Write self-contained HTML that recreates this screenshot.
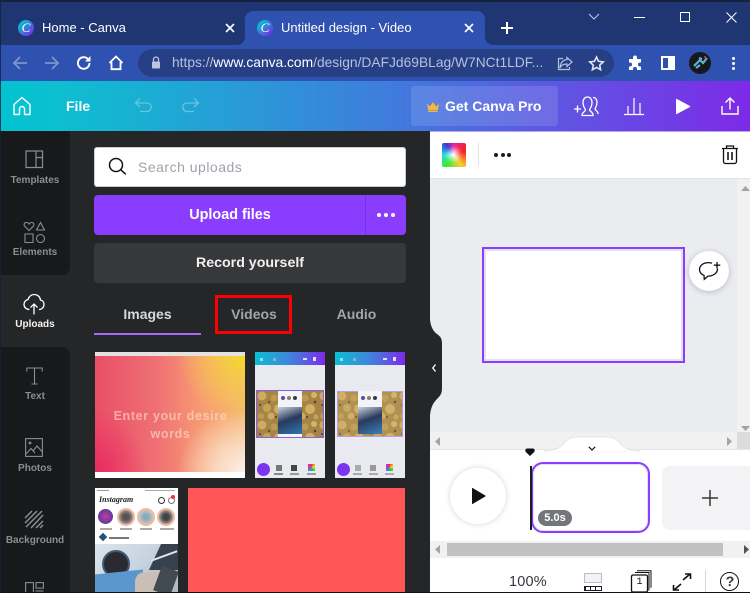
<!DOCTYPE html>
<html><head><meta charset="utf-8">
<style>
html,body{margin:0;padding:0;background:#fff}
#p{position:relative;width:750px;height:593px;overflow:hidden;font-family:"Liberation Sans",sans-serif;background:#fff}
#p div,#p span,#p svg{position:absolute}
.t{white-space:nowrap;line-height:1}
.side{left:0;width:70px;text-align:center;font-size:10px;font-weight:bold;color:#8b8d90;letter-spacing:0}
svg.abs{overflow:visible}
</style></head><body>
<div id="p">
<!-- chrome -->
<div style="left:0;top:0;width:750px;height:45px;background:#1f3672"></div>
<div style="left:0;top:0;width:750px;height:2px;background:#14213f"></div>
<div style="left:245px;top:11px;width:240px;height:34px;background:#2f52b0;border-radius:8px 8px 0 0"></div>
<div style="left:0;top:45px;width:750px;height:37px;background:#2f52b0"></div>
<div style="left:237px;top:37px;width:8px;height:8px;background:#2f52b0"></div>
<div style="left:229px;top:37px;width:16px;height:8px;background:#1f3672;border-radius:0 0 8px 0"></div>
<div style="left:485px;top:37px;width:8px;height:8px;background:#2f52b0"></div>
<div style="left:485px;top:37px;width:16px;height:8px;background:#1f3672;border-radius:0 0 0 8px"></div>
<div style="left:18px;top:20px;width:16px;height:16px;border-radius:50%;background:linear-gradient(135deg,#00c4cc 15%,#7d2ae8 90%)"></div>
<div class="t" style="left:18px;top:20px;width:16px;text-align:center;font:italic 13px/16px 'Liberation Serif',serif;color:#fff">C</div>
<div class="t" style="left:42px;top:21px;font-size:13px;color:#fff">Home - Canva</div>
<svg class="abs" style="left:225px;top:23px" width="10" height="10"><path d="M1 1l8 8M9 1l-8 8" stroke="#fff" stroke-width="1.600"/></svg>
<div style="left:257px;top:20px;width:16px;height:16px;border-radius:50%;background:linear-gradient(135deg,#00c4cc 15%,#7d2ae8 90%)"></div>
<div class="t" style="left:257px;top:20px;width:16px;text-align:center;font:italic 13px/16px 'Liberation Serif',serif;color:#fff">C</div>
<div class="t" style="left:281px;top:21px;font-size:13px;color:#fff">Untitled design - Video</div>
<svg class="abs" style="left:464px;top:23px" width="10" height="10"><path d="M1 1l8 8M9 1l-8 8" stroke="#fff" stroke-width="1.600"/></svg>
<svg class="abs" style="left:501px;top:22px" width="12" height="12"><path d="M6 0v12M0 6h12" stroke="#fff" stroke-width="2"/></svg>
<svg class="abs" style="left:588px;top:13px" width="12" height="8"><path d="M1 1l5 5 5-5" stroke="#c5cde3" stroke-width="1" fill="none"/></svg>
<div style="left:634px;top:17px;width:11px;height:1px;background:#fff"></div>
<div style="left:680px;top:12px;width:8px;height:8px;border:1px solid #fff"></div>
<svg class="abs" style="left:726px;top:12px" width="11" height="11"><path d="M.5.500l10 10M10.500.500l-10 10" stroke="#fff" stroke-width="1"/></svg>
<!-- nav -->
<svg class="abs" style="left:12px;top:55px" width="16" height="16"><path d="M15 8H2M8 2L2 8l6 6" stroke="#7f95cf" stroke-width="1.800" fill="none"/></svg>
<svg class="abs" style="left:44px;top:55px" width="16" height="16"><path d="M1 8h13M8 2l6 6-6 6" stroke="#7f95cf" stroke-width="1.800" fill="none"/></svg>
<svg class="abs" style="left:76px;top:55px" width="16" height="16"><path d="M13.500 8a5.800 5.800 0 1 1-1.700-4.100" stroke="#fff" stroke-width="1.900" fill="none"/><path d="M14.500 1v5.500H9z" fill="#fff"/></svg>
<svg class="abs" style="left:108px;top:55px" width="16" height="16"><path d="M1.500 8L8 1.500 14.500 8M3.500 7v7.200h9V7" stroke="#fff" stroke-width="1.800" fill="none"/></svg>
<div style="left:138px;top:49px;width:476px;height:28px;border-radius:14px;background:#263f85"></div>
<svg class="abs" style="left:150px;top:56px" width="12" height="13"><rect x="2" y="5.500" width="8" height="7" rx="1" fill="#bcc5dd"/><path d="M3.500 6V3.500a2.500 2.500 0 0 1 5 0V6" stroke="#bcc5dd" stroke-width="1.300" fill="none"/></svg>
<div class="t" style="left:172px;top:56px;font-size:13.800px;color:#b5c0dc">https://<span style="position:static;color:#fff">www.canva.com</span>/design/DAFJd69BLag/W7NCt1LDF...</div>
<svg class="abs" style="left:557px;top:56px" width="16" height="15"><path d="M10 1.500l5 4.500-5 4.500V8C6 8 4 9.500 3 12c0-5 3-8 7-8.500zM6 2.500H1.500v11h11V11" stroke="#b5c0dc" stroke-width="1.200" fill="none"/></svg>
<svg class="abs" style="left:589px;top:56px" width="15" height="14"><path d="M7.500 1l2 4.300 4.700.6-3.500 3.200.9 4.600-4.100-2.300-4.100 2.300.9-4.600L.8 5.900l4.700-.6z" stroke="#dfe4f2" stroke-width="1.600" fill="none"/></svg>
<svg class="abs" style="left:628px;top:55px" width="15" height="15"><path d="M5 2.500a2 2 0 0 1 4 0V4h4v3.500h-1a2 2 0 0 0 0 4h1V15H9v-1a2 2 0 0 0-4 0v1H1v-3.500h1a2 2 0 0 0 0-4H1V4h4z" fill="#fff"/></svg>
<div style="left:661px;top:56px;height:10px;border:2px solid #fff;border-right:7px solid #fff;width:5px"></div>
<div style="left:689px;top:52px;width:22px;height:22px;border-radius:50%;background:#16181d"></div>
<svg class="abs" style="left:691px;top:55px" width="18" height="16"><path d="M3 11L9 5l3 3 4-5M5 13l4-3M8 3l3 1" stroke="#5fb5cf" stroke-width="2.200" fill="none"/><circle cx="14" cy="2" r="1" fill="#d44"/></svg>
<div style="left:732px;top:57px;width:3px;height:3px;border-radius:50%;background:#fff"></div>
<div style="left:732px;top:62px;width:3px;height:3px;border-radius:50%;background:#fff"></div>
<div style="left:732px;top:67px;width:3px;height:3px;border-radius:50%;background:#fff"></div>
<!-- canva header -->
<div style="left:0;top:81px;width:750px;height:50px;background:linear-gradient(90deg,#02c3cf 0%,#0dbfd0 8%,#3d7fdc 50%,#5f55e2 75%,#7d2ae8 100%)"></div>
<svg class="abs" style="left:12px;top:96px" width="20" height="20"><path d="M2 18.500h5.500V13a2.500 2.500 0 0 1 5 0v5.500H18V8.500L10 1.500 2 8.500z" stroke="#fff" stroke-width="1.400" fill="none" stroke-linejoin="round"/></svg>
<div class="t" style="left:66px;top:99px;font-size:14px;font-weight:bold;color:#fff">File</div>
<svg class="abs" style="left:134px;top:97px" width="20" height="16"><path d="M6 1.500L1.500 6 6 10M2 6h11a4 4 0 0 1 0 8.500H6" stroke="#6bc3dc" stroke-width="1.300" fill="none"/></svg>
<svg class="abs" style="left:180px;top:97px" width="20" height="16"><path d="M14 1.500L18.500 6 14 10M18 6H7a4 4 0 0 0 0 8.500h7" stroke="#6bc3dc" stroke-width="1.300" fill="none"/></svg>
<div style="left:411px;top:86px;width:147px;height:40px;border-radius:3px;background:rgba(255,255,255,.12)"></div>
<svg class="abs" style="left:427px;top:102px" width="12" height="10"><path d="M0 1.500l3 3L6 0l3 4.500 3-3L10.800 8H1.200z" fill="#f5b83d"/><rect x="1.200" y="8.500" width="9.600" height="1.500" fill="#f5b83d"/></svg>
<div class="t" style="left:445px;top:99px;font-size:14px;font-weight:bold;color:#fff">Get Canva Pro</div>
<svg class="abs" style="left:574px;top:95px" width="25" height="22"><path d="M0 14h7M3.500 10.500v7" stroke="#fff" stroke-width="1.300"/><path d="M8 20.500h11c.5-3-3-4-3.500-5.500.5-1.500 2.500-3.500 2.500-7.500C18 4 16 2 13.500 2S9 4 9 7.500c0 4 2 6 2.500 7.500C11 17 7.500 17.500 8 20.500zM19 2.500c2.500 0 4 2 4 5 0 3.500-1.500 5-2 6.500.5 1.500 3.500 2.500 3 5" stroke="#fff" stroke-width="1.300" fill="none"/></svg>
<svg class="abs" style="left:624px;top:96px" width="20" height="20"><path d="M0 18.500h20M4 18V10M10 18V2M16 18V7" stroke="#fff" stroke-width="1.200"/></svg>
<svg class="abs" style="left:675px;top:98px" width="16" height="17"><path d="M1 1.500v14a.6.600 0 0 0 .9.500L15 9a.6.600 0 0 0 0-1L1.900 1a.6.600 0 0 0-.9.500z" fill="#fff"/></svg>
<svg class="abs" style="left:721px;top:97px" width="18" height="18"><path d="M9 12.500V1.500M4.500 5.500L9 1l4.500 4.500M1 9v8h16V9" stroke="#fff" stroke-width="1.400" fill="none"/></svg>
<!-- sidebar -->
<div style="left:0;top:131px;width:430px;height:462px;background:#252627"></div>
<div style="left:0;top:131px;width:70px;height:144px;background:#18191b;border-radius:0 0 8px 0"></div>
<div style="left:0;top:347px;width:70px;height:246px;background:#18191b;border-radius:0 8px 0 0"></div>
<svg class="abs" style="left:25px;top:150px" width="19" height="19"><path d="M1 1h16.500v16.500H1zM11 1v16.500M11 7.500h6.500" stroke="#8b8d90" stroke-width="1.200" fill="none"/></svg>
<div class="t side" style="top:176px">Templates</div>
<svg class="abs" style="left:23px;top:221px" width="22" height="24"><path d="M6 9.500L1.500 5c-1-1.200-.3-3.500 1.700-3.500C4.500 1.500 5.500 2 6 3c.5-1 1.500-1.500 2.800-1.500 2 0 2.700 2.300 1.700 3.500zM17.500 1.500L21.500 9h-8zM2 13h8v8.500H2z" stroke="#8b8d90" stroke-width="1.100" fill="none"/><circle cx="17.500" cy="17.500" r="4" stroke="#8b8d90" stroke-width="1.100" fill="none"/></svg>
<div class="t side" style="top:248px">Elements</div>
<svg class="abs" style="left:23px;top:293px" width="22" height="22"><path d="M6.500 16.500C3.500 16.500 1 14.500 1 11.500c0-2.700 2-4.700 4-5C6 3.500 8.300 1.500 11.200 1.500c3.500 0 6 2.500 6.300 5.500 2.200.5 3.500 2.400 3.500 4.500 0 2.800-2.300 5-5 5" stroke="#fff" stroke-width="1.300" fill="none"/><path d="M11 21.500v-10M7.500 14.500l3.500-3.500 3.500 3.500" stroke="#fff" stroke-width="1.300" fill="none"/></svg>
<div class="t side" style="top:320px;color:#f3f3f3">Uploads</div>
<svg class="abs" style="left:26px;top:367px" width="17" height="18"><path d="M.8 4.500V1h15.400v3.500M8.500 1v16M5.500 17h6" stroke="#8b8d90" stroke-width="1.100" fill="none"/></svg>
<div class="t side" style="top:392px">Text</div>
<svg class="abs" style="left:25px;top:438px" width="18" height="19"><rect x=".6" y=".6" width="16.800" height="17.800" stroke="#8b8d90" stroke-width="1.100" fill="none"/><path d="M1 16l5-5.500 4 4.500M8 13l4-5 5.500 6" stroke="#8b8d90" stroke-width="1.100" fill="none"/><circle cx="5" cy="5" r="1.400" fill="#8b8d90"/></svg>
<div class="t side" style="top:464px">Photos</div>
<svg class="abs" style="left:24px;top:510px" width="20" height="19"><path d="M1 8l7-7M1 13L13 1M2 17L18 1M7 18L19 5M12 18l7-7M16 18l3-3" stroke="#8b8d90" stroke-width="1.500"/></svg>
<div class="t side" style="top:536px">Background</div>
<svg class="abs" style="left:25px;top:582px" width="19" height="11"><rect x=".6" y=".6" width="7.800" height="10" stroke="#8b8d90" stroke-width="1.100" fill="none"/><rect x="11" y=".6" width="7.400" height="5.500" stroke="#8b8d90" stroke-width="1.100" fill="none"/><path d="M10.500 9h8" stroke="#8b8d90" stroke-width="1.100"/></svg>
<!-- panel -->
<div style="left:94px;top:147px;width:310px;height:38px;background:#fff;border:1px solid #c9ccd6;border-radius:3px"></div>
<svg class="abs" style="left:108px;top:157px" width="20" height="20"><circle cx="8" cy="8" r="6.500" stroke="#0e1318" stroke-width="1.500" fill="none"/><path d="M12.800 12.800l5 4.500" stroke="#0e1318" stroke-width="1.500"/></svg>
<div class="t" style="left:138px;top:160px;font-size:14px;color:#9ea2aa;letter-spacing:.5px">Search uploads</div>
<div style="left:94px;top:195px;width:312px;height:40px;background:#8b3dff;border-radius:4px"></div>
<div style="left:365px;top:195px;width:1px;height:40px;background:#7a30e6"></div>
<div class="t" style="left:94px;top:208px;width:272px;text-align:center;font-size:14.400px;font-weight:bold;color:#fff">Upload files</div>
<div style="left:377px;top:213px;width:4px;height:4px;border-radius:50%;background:#fff"></div>
<div style="left:384px;top:213px;width:4px;height:4px;border-radius:50%;background:#fff"></div>
<div style="left:391px;top:213px;width:4px;height:4px;border-radius:50%;background:#fff"></div>
<div style="left:94px;top:243px;width:312px;height:40px;background:#37383a;border-radius:4px"></div>
<div class="t" style="left:94px;top:256px;width:312px;text-align:center;font-size:14.200px;font-weight:bold;color:#f1f1f1">Record yourself</div>
<div class="t" style="left:94px;top:307px;width:107px;text-align:center;font-size:14px;font-weight:bold;color:#d6d7d9">Images</div>
<div style="left:94px;top:333px;width:107px;height:2px;background:#a36cf0"></div>
<div class="t" style="left:215px;top:307px;width:78px;text-align:center;font-size:14px;font-weight:bold;color:#a3a5a9">Videos</div>
<div class="t" style="left:303px;top:307px;width:107px;text-align:center;font-size:14px;font-weight:bold;color:#a3a5a9">Audio</div>
<div style="left:215px;top:295px;width:71px;height:33px;border:3px solid #ff0000"></div>
<!-- thumb 1 -->
<div style="left:95px;top:352px;width:150px;height:126px;background:#fff;overflow:hidden">
 <div style="left:0;top:0;width:150px;height:4px;background:#e4e2e0"></div>
 <div style="left:0;top:4px;width:150px;height:116px;background:radial-gradient(ellipse 45% 55% at 100% 0,#f4d92a 0,rgba(245,205,70,.75) 40%,rgba(246,184,92,0) 100%),radial-gradient(ellipse 45% 55% at 100% 100%,#fbf0ea 0,rgba(250,222,200,.85) 45%,rgba(246,190,140,0) 100%),radial-gradient(ellipse 35% 55% at 0 100%,#e92c60 0,rgba(233,50,96,0) 100%),linear-gradient(90deg,#ea4f68 0%,#ef6f74 40%,#f79c74 72%,#f5b86c 100%)"></div>
</div>
<div class="t" style="left:88px;top:407px;width:165px;text-align:center;font-size:12.500px;font-weight:bold;color:rgba(255,222,205,.62);letter-spacing:.65px;line-height:18px;white-space:normal"><span style="position:static;display:block;white-space:nowrap">Enter your desire</span><span style="position:static;display:block">words</span></div>
<!-- thumb 2 -->
<div style="left:255px;top:352px;width:70px;height:126px;background:#e9eaef;overflow:hidden">
 <div style="left:0;top:0;width:70px;height:13px;background:linear-gradient(90deg,#0bbfd0,#3f84dc 50%,#7d2ae8)"></div>
 <div style="left:5px;top:6px;width:3px;height:3px;background:#9fd8e8"></div><div style="left:18px;top:6px;width:3px;height:3px;background:#7fb4e0"></div><div style="left:48px;top:6px;width:4px;height:2px;background:#dfe0f8"></div><div style="left:58px;top:5px;width:3px;height:4px;background:#e4dcf8"></div>
 <div style="left:2px;top:39px;width:66px;height:46px;background:#8b6f3a;outline:1px solid #8a5fe0"></div>
 <svg class="abs" style="left:2px;top:39px" width="66" height="46"><defs><pattern id="g" width="31" height="29" patternUnits="userSpaceOnUse"><rect width="31" height="29" fill="#a58545"/><circle cx="5" cy="5" r="4.500" fill="#d0aa62"/><circle cx="17" cy="7" r="3.500" fill="#bd9a50"/><circle cx="26" cy="4" r="3" fill="#d6b26c"/><circle cx="10" cy="17" r="4" fill="#c8a258"/><circle cx="22" cy="18" r="5" fill="#d4ae66"/><circle cx="4" cy="25" r="3" fill="#bd9a50"/><circle cx="14" cy="25" r="3.500" fill="#d0aa62"/><circle cx="28" cy="26" r="2.500" fill="#c8a258"/><circle cx="12" cy="11" r="1" fill="#4c3e2a"/><circle cx="27" cy="11" r="1.200" fill="#4c3e2a"/><circle cx="3" cy="14" r="1" fill="#54452e"/><circle cx="19" cy="26" r="1" fill="#4c3e2a"/></pattern></defs><rect width="66" height="46" fill="url(#g)"/></svg>
 <div style="left:23px;top:39px;width:24px;height:16px;background:#f3f4f7"></div>
 <div style="left:26px;top:44px;width:4px;height:4px;border-radius:50%;background:#5f4d8c"></div>
 <div style="left:32px;top:44px;width:4px;height:4px;border-radius:50%;background:#8c7b70"></div>
 <div style="left:38px;top:44px;width:4px;height:4px;border-radius:50%;background:#3a3a40"></div>
 <div style="left:23px;top:55px;width:24px;height:28px;background:linear-gradient(160deg,#c9d4de 0,#2a3a5c 45%,#2f78b8 100%)"></div>
 <div style="left:23px;top:82px;width:24px;height:3px;background:#f3f4f7"></div>
 <div style="left:2px;top:111px;width:13px;height:13px;border-radius:50%;background:#7a36ef"></div>
 <div style="left:21px;top:113px;width:6px;height:6px;background:#777"></div>
 <div style="left:36px;top:113px;width:6px;height:6px;background:#444"></div>
 <div style="left:53px;top:112px;width:7px;height:7px;background:conic-gradient(#e33,#ed3,#3c3,#38e,#c3d,#e33)"></div>
 <div style="left:19px;top:121px;width:9px;height:2px;background:#888"></div>
 <div style="left:35px;top:121px;width:9px;height:2px;background:#999"></div>
 <div style="left:52px;top:121px;width:9px;height:2px;background:#999"></div>
</div>
<!-- thumb 3 -->
<div style="left:335px;top:352px;width:70px;height:126px;background:#e9eaef;overflow:hidden">
 <div style="left:0;top:0;width:70px;height:13px;background:linear-gradient(90deg,#0bbfd0,#3f84dc 50%,#7d2ae8)"></div>
 <div style="left:5px;top:6px;width:3px;height:3px;background:#9fd8e8"></div><div style="left:18px;top:6px;width:3px;height:3px;background:#7fb4e0"></div><div style="left:48px;top:6px;width:4px;height:2px;background:#dfe0f8"></div><div style="left:58px;top:5px;width:3px;height:4px;background:#e4dcf8"></div>
 <svg class="abs" style="left:2px;top:39px" width="66" height="46"><rect width="66" height="46" fill="url(#g)"/><rect width="66" height="46" fill="#d8c080" opacity=".22"/></svg>
 <div style="left:2px;top:39px;width:64px;height:44px;border:1px solid #b79de8"></div>
 <div style="left:23px;top:39px;width:24px;height:16px;background:#f3f4f7"></div>
 <div style="left:26px;top:44px;width:4px;height:4px;border-radius:50%;background:#5f4d8c"></div>
 <div style="left:32px;top:44px;width:4px;height:4px;border-radius:50%;background:#8c7b70"></div>
 <div style="left:38px;top:44px;width:4px;height:4px;border-radius:50%;background:#3a3a40"></div>
 <div style="left:23px;top:55px;width:24px;height:27px;background:linear-gradient(160deg,#c9d4de 0,#2a3a5c 45%,#3a80bc 100%)"></div>
 <div style="left:2px;top:111px;width:13px;height:13px;border-radius:50%;background:#7a36ef"></div>
 <div style="left:20px;top:113px;width:6px;height:6px;background:#aaa"></div>
 <div style="left:35px;top:113px;width:6px;height:6px;background:#999"></div>
 <div style="left:51px;top:112px;width:7px;height:7px;background:conic-gradient(#e33,#ed3,#3c3,#38e,#c3d,#e33)"></div>
 <div style="left:18px;top:121px;width:9px;height:2px;background:#aaa"></div>
 <div style="left:34px;top:121px;width:9px;height:2px;background:#aaa"></div>
 <div style="left:50px;top:121px;width:9px;height:2px;background:#aaa"></div>
</div>
<!-- thumb 4 -->
<div style="left:95px;top:488px;width:83px;height:105px;background:#fff;overflow:hidden">
 <div style="left:2px;top:2px;width:12px;height:1px;background:#999"></div>
 <div style="left:50px;top:2px;width:30px;height:1px;background:#aaa"></div>
 <div class="t" style="left:4px;top:8px;font:italic bold 8px/1 'Liberation Serif',serif;color:#222">Instagram</div>
 <div style="left:63px;top:9px;width:5px;height:5px;border:1px solid #333;border-radius:50%"></div>
 <div style="left:73px;top:9px;width:5px;height:5px;border:1px solid #777;border-radius:50%"></div>
 <div style="left:76px;top:7px;width:4px;height:4px;background:#e33;border-radius:50%"></div>
 <div style="left:3px;top:21px;width:15px;height:15px;border-radius:50%;background:radial-gradient(#c13ba0,#3a3a9a)"></div>
 <div style="left:22px;top:20px;width:14px;height:14px;border-radius:50%;background:radial-gradient(#555 30%,#d8c4b8);border:2px solid #f2b8a0"></div>
 <div style="left:42px;top:20px;width:14px;height:14px;border-radius:50%;background:radial-gradient(#8ab 25%,#e8dcc8);border:2px solid #f2b8a0"></div>
 <div style="left:62px;top:20px;width:14px;height:14px;border-radius:50%;background:radial-gradient(#444 30%,#e4ddd8);border:2px solid #f2b8a0"></div>
 <div style="left:5px;top:40px;width:12px;height:2px;background:#aaa"></div>
 <div style="left:25px;top:40px;width:12px;height:2px;background:#aaa"></div>
 <div style="left:45px;top:40px;width:12px;height:2px;background:#aaa"></div>
 <div style="left:65px;top:40px;width:14px;height:2px;background:#aaa"></div>
 <div style="left:5px;top:46px;width:6px;height:6px;background:#25507a;transform:rotate(45deg)"></div>
 <div style="left:14px;top:49px;width:20px;height:2px;background:#777"></div>
 <div style="left:0;top:56px;width:83px;height:49px;background:linear-gradient(135deg,#dbe5ec 0,#c6d4df 50%,#b9c4cf 70%,#b0bac6 100%)"></div>
 <div style="left:50px;top:56px;width:33px;height:26px;background:#37404d;transform:skewX(-25deg) translateX(10px)"></div>
 <div style="left:7px;top:62px;width:24px;height:24px;border-radius:50%;background:#2b2a30;border:2px solid #44597a"></div>
 <div style="left:0;top:84px;width:48px;height:24px;background:#5b97cc;transform:skewY(-6deg)"></div>
 <div style="left:40px;top:84px;width:26px;height:21px;background:#cbbeb6;border-radius:10px 0 0 0"></div>
 <div style="left:62px;top:80px;width:18px;height:26px;background:#444a52;transform:rotate(20deg)"></div>
 <div style="left:55px;top:67px;width:28px;height:2px;background:#dfe4ee;transform:rotate(-20deg)"></div>
</div>
<div style="left:188px;top:488px;width:217px;height:105px;background:#ff5757"></div>
<!-- right -->
<div style="left:430px;top:131px;width:320px;height:48px;background:#fff;border-bottom:1px solid #e2e3e8;box-sizing:border-box"></div>
<div style="left:430px;top:131px;width:320px;height:1px;background:#8a67e8;opacity:.6"></div>
<div style="left:430px;top:179px;width:307px;height:253px;background:#ebecf0"></div>
<div style="left:737px;top:179px;width:13px;height:253px;background:#f1f1f1"></div>
<div style="left:442px;top:143px;width:24px;height:24px;border-radius:2px;background:radial-gradient(circle at 48% 48%,#fff 0,rgba(255,255,255,.1) 45%,rgba(255,255,255,0) 60%),conic-gradient(from 0deg,#f0208c,#f52222 20%,#f7d02a 40%,#38e838 60%,#22e0d8 75%,#3a38d8 90%,#f0208c)"></div>
<div style="left:478px;top:143px;width:1px;height:24px;background:#e2e3e8"></div>
<div style="left:494px;top:153px;width:4px;height:4px;border-radius:50%;background:#1a1c25"></div>
<div style="left:501px;top:153px;width:4px;height:4px;border-radius:50%;background:#1a1c25"></div>
<div style="left:507px;top:153px;width:4px;height:4px;border-radius:50%;background:#1a1c25"></div>
<svg class="abs" style="left:721px;top:145px" width="18" height="20"><path d="M1 3.500h16M5.500 3.500V1h7v2.500" stroke="#0e1318" stroke-width="1.300" fill="none"/><path d="M2.500 3.500v13a2 2 0 0 0 2 2h9a2 2 0 0 0 2-2v-13" stroke="#0e1318" stroke-width="1.300" fill="none"/><path d="M7 7v8M11 7v8" stroke="#4a4540" stroke-width="2"/></svg>
<!-- canvas -->
<div style="left:482px;top:247px;width:199px;height:112px;background:#fff;border:2px solid #8b3dff;box-shadow:inset 0 0 0 2px #e2e1f3"></div>
<div style="left:689px;top:251px;width:40px;height:40px;border-radius:50%;background:#fff;box-shadow:0 1px 6px rgba(60,60,120,.3)"></div>
<svg class="abs" style="left:698px;top:260px" width="24" height="23"><path d="M14 3.200C12.800 2.800 11.500 2.600 10.500 2.600 5.500 2.600 1.500 5.400 1.500 9.500c0 2.700 1.800 4.800 4.500 5.800l.3 4 3.700-3.200c5 0 9.500-2.800 9.500-7.500" stroke="#0e1318" stroke-width="1.300" fill="none"/><path d="M19 2v6.500M15.800 5.200h6.500" stroke="#0e1318" stroke-width="1.300"/></svg>
<!-- handle -->
<svg class="abs" style="left:430px;top:320px" width="13" height="95"><path d="M0 0C1 7 3 11 7 14c4 3 5 5 5 10v44c0 6-2 8-5 11C3 83 1 87 0 95z" fill="#252627"/></svg>
<svg class="abs" style="left:431px;top:363px" width="6" height="10"><path d="M4.500 1.500L1.800 5 4.500 8.500" stroke="#fff" stroke-width="1.300" fill="none"/></svg>
<!-- h scrollbar 1 -->
<div style="left:430px;top:432px;width:320px;height:18px;background:#f1f1f1"></div>
<div style="left:737px;top:432px;width:13px;height:18px;background:#dcdcdc"></div>
<svg class="abs" style="left:435px;top:437px" width="6" height="9"><path d="M5 0v9L0 4.500z" fill="#a3a3a3"/></svg>
<svg class="abs" style="left:727px;top:437px" width="6" height="9"><path d="M0 0v9l5-4.500z" fill="#a3a3a3"/></svg>
<svg class="abs" style="left:741px;top:426px" width="9" height="5"><path d="M0 0h9L4.500 5z" fill="#a3a3a3"/></svg>
<svg class="abs" style="left:741px;top:186px" width="9" height="5"><path d="M0 5h9L4.500 0z" fill="#a3a3a3"/></svg>
<!-- timeline -->
<div style="left:430px;top:450px;width:320px;height:91px;background:#fff"></div>
<div style="left:430px;top:449px;width:320px;height:1px;background:#e4e5ea"></div>
<svg class="abs" style="left:545px;top:436px" width="94" height="15"><path d="M0 14.500c10 0 14-2 18-6 4-5 7-7.500 13-7.500h32c6 0 9 2.500 13 7.500 4 4 8 6 18 6v1H0z" fill="#fff" stroke="#e4e5ea"/><path d="M1 14.800h92v1H1z" fill="#fff"/></svg>
<svg class="abs" style="left:588px;top:446px" width="8" height="5"><path d="M.8.800L4 4 7.200.8" stroke="#0e1318" stroke-width="1.200" fill="none"/></svg>
<svg class="abs" style="left:525px;top:448px" width="10" height="8"><path d="M5 8L.8 4C-.3 2.500.5.500 2 .5h6c1.500 0 2.300 2 1.200 3.500z" fill="#0e1318"/></svg>
<div style="left:450px;top:468px;width:56px;height:56px;border-radius:50%;background:#fff;box-shadow:0 0 6px rgba(60,60,90,.22)"></div>
<svg class="abs" style="left:471px;top:487px" width="15" height="18"><path d="M1 1.500v15a.5.500 0 0 0 .8.400L14.500 9.400a.5.500 0 0 0 0-.8L1.800 1.100a.5.500 0 0 0-.8.400z" fill="#0e1318"/></svg>
<div style="left:531px;top:462px;width:115px;height:67px;background:#fff;border:2px solid #8b3dff;border-radius:12px;box-shadow:inset 0 0 0 1px #e3e3ea"></div>
<div style="left:529.500px;top:466px;width:2px;height:64px;background:#1a1c25"></div>
<div class="t" style="left:538px;top:510px;width:34px;height:16px;border-radius:8px;background:#73757a;color:#fff;font-size:11px;font-weight:bold;line-height:16px;text-align:center">5.0s</div>
<div style="left:662px;top:466px;width:100px;height:64px;background:#f3f3f5;border-radius:8px"></div>
<svg class="abs" style="left:702px;top:490px" width="16" height="16"><path d="M8 0v16M0 8h16" stroke="#3a3430" stroke-width="1.500"/></svg>
<!-- h scrollbar 2 -->
<div style="left:430px;top:541px;width:320px;height:17px;background:#f1f1f1"></div>
<div style="left:447px;top:543px;width:276px;height:13px;background:#c1c1c1"></div>
<svg class="abs" style="left:435px;top:545px" width="6" height="9"><path d="M5 0v9L0 4.500z" fill="#a3a3a3"/></svg>
<svg class="abs" style="left:744px;top:545px" width="6" height="9"><path d="M0 0v9l5-4.500z" fill="#505050"/></svg>
<!-- footer -->
<div class="t" style="left:509px;top:575px;font-size:14.500px;color:#33363d;letter-spacing:.2px">100%</div>
<div style="left:584px;top:573px;width:16px;height:8px;border:1px solid #b9bcc6;background:#f3f3f6"></div>
<div style="left:584px;top:586px;width:18px;height:5px;background:#1a1c25"></div>
<div style="left:585.500px;top:587px;width:4px;height:3px;background:#fff"></div>
<div style="left:590.500px;top:587px;width:4px;height:3px;background:#fff"></div>
<div style="left:596px;top:587px;width:4.500px;height:3px;background:#fff"></div>
<svg class="abs" style="left:630px;top:570px" width="22" height="23"><rect x="1.500" y="5" width="16" height="17" rx="1.500" stroke="#0e1318" stroke-width="1.300" fill="none"/><path d="M5 2.500h14v18M7 .8h14v17" stroke="#0e1318" stroke-width="1" fill="none"/></svg>
<div class="t" style="left:631px;top:578px;width:17px;text-align:center;font-size:10px;color:#0e1318;font-family:'Liberation Mono',monospace">1</div>
<svg class="abs" style="left:672px;top:573px" width="20" height="18"><path d="M11 7l7-6M13 1h5.500v5M9 11l-7 6M7 17H1.500v-5" stroke="#0e1318" stroke-width="1.600" fill="none"/></svg>
<div style="left:705px;top:570px;width:1px;height:23px;background:#d5d6dc"></div>
<div style="left:720px;top:572px;width:17px;height:17px;border:1.500px solid #0e1318;border-radius:50%"></div>
<div class="t" style="left:720px;top:574px;width:20px;text-align:center;font-size:14px;font-weight:bold;color:#33363d">?</div>
<div style="left:0;top:592px;width:750px;height:1px;background:#111"></div>
<div style="left:0;top:0;width:1px;height:593px;background:#14213f;opacity:.8"></div>
</div>
</body></html>
